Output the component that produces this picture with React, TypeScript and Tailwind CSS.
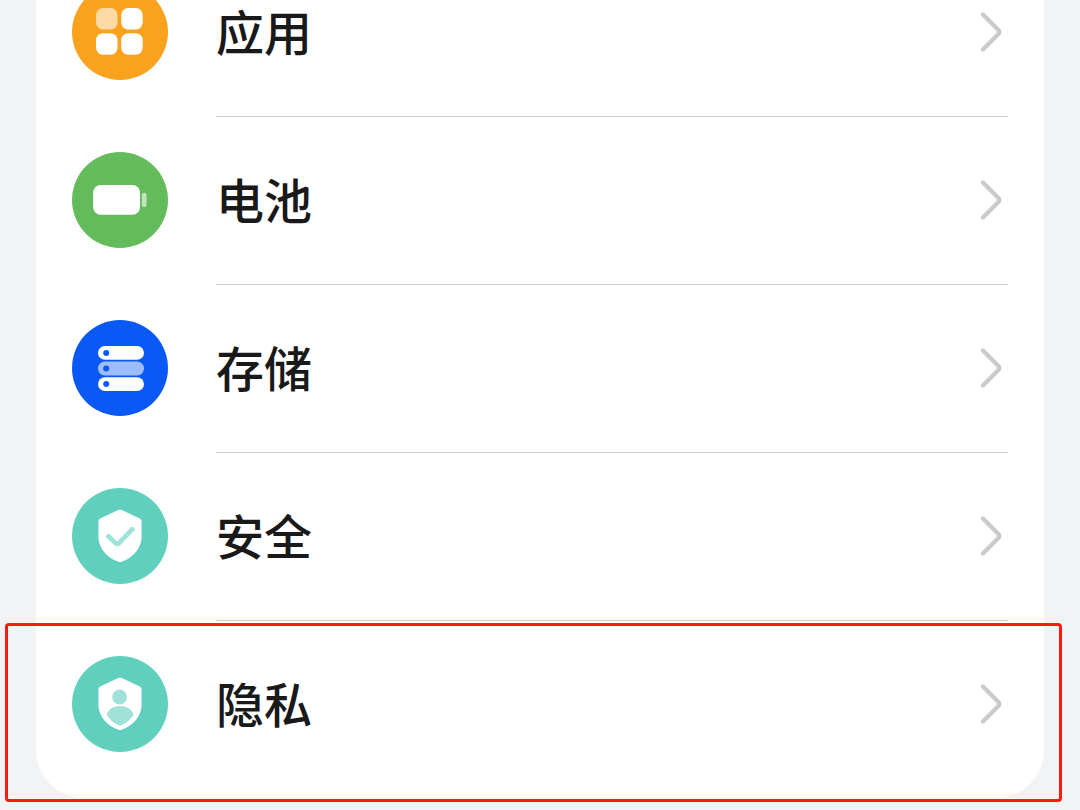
import type { ReactNode } from "react";

type Item = { id: string; label: string; color: string; icon: ReactNode; marked?: boolean };

const shield =
  "M45.8 22.2a4.5 4.5 0 0 1 4.4 0L67.8 30.4Q69.6 31.4 69.6 33.6V48C69.6 60 61.5 69.5 50.2 73.6Q48 74.6 45.8 73.6C34.5 69.5 26.4 60 26.4 48V33.6Q26.4 31.4 28.2 30.4Z";

const items: Item[] = [
  {
    id: "apps",
    label: "应用",
    color: "bg-[#faa21e]",
    icon: (
      <g fill="#fff">
        <rect x="24" y="24" width="21.5" height="21.5" rx="7" opacity="0.6" />
        <rect x="49.2" y="24" width="21.5" height="21.5" rx="7" />
        <rect x="24" y="49.2" width="21.5" height="21.5" rx="7" />
        <rect x="49.2" y="49.2" width="21.5" height="21.5" rx="7" />
      </g>
    ),
  },
  {
    id: "battery",
    label: "电池",
    color: "bg-[#64bb5c]",
    icon: (
      <g fill="#fff">
        <rect x="21.2" y="33" width="46.8" height="29.8" rx="7.5" />
        <rect x="69.8" y="40.8" width="4.8" height="14.2" rx="2.2" opacity="0.6" />
      </g>
    ),
  },
  {
    id: "storage",
    label: "存储",
    color: "bg-[#0a59f7]",
    icon: (
      <g>
        <rect x="26" y="26" width="46" height="13.8" rx="6.9" fill="#fff" />
        <rect x="26" y="41.6" width="46" height="13.8" rx="6.9" fill="#fff" opacity="0.6" />
        <rect x="26" y="57.2" width="46" height="13.8" rx="6.9" fill="#fff" />
        <g fill="#0a59f7">
          <circle cx="34.2" cy="32.9" r="3" />
          <circle cx="34.2" cy="48.5" r="3" />
          <circle cx="34.2" cy="64.1" r="3" />
        </g>
      </g>
    ),
  },
  {
    id: "security",
    label: "安全",
    color: "bg-[#61cfbe]",
    icon: (
      <g>
        <path d={shield} fill="#fff" />
        <path
          d="M36.4 48.2l6.900 6.700q1.900 1.900 3.900 0L60.400 41.200"
          fill="none"
          stroke="#a0e2d8"
          strokeWidth="4.8"
          strokeLinecap="round"
          strokeLinejoin="round"
        />
      </g>
    ),
  },
  {
    id: "privacy",
    label: "隐私",
    color: "bg-[#61cfbe]",
    marked: true,
    icon: (
      <g>
        <path d={shield} fill="#fff" />
        <g fill="#a0e2d8">
          <circle cx="47.6" cy="41" r="7.4" />
          <path d="M34.6 58.4C36.6 53 42 50 48 50s11.6 3 13.6 8.4C58.6 63.3 54.5 67 49.8 69.1Q48 69.9 46.2 69.1C41.5 67 37.6 63.3 34.6 58.4Z" />
        </g>
      </g>
    ),
  },
];

function Row({ item }: { item: Item }) {
  return (
    <li className="relative">
      <a href={`#${item.id}`} className="flex h-42 items-stretch gap-12 px-9">
        <span className="flex items-center">
          <span className={`size-24 shrink-0 rounded-full ${item.color}`}>
            <svg viewBox="0 0 96 96" className="size-24" aria-hidden="true">
              {item.icon}
            </svg>
          </span>
        </span>
        <span className="flex flex-1 items-center justify-between border-t border-[#cfcfcf] pr-1 pb-px">
          <span className="pb-1 text-5xl font-medium text-[#191919]">{item.label}</span>
          <svg viewBox="0 0 24 48" className="h-12 w-6" fill="none" aria-hidden="true">
            <path
              d="M3 6.5L18.6 22.2Q20.2 24 18.6 25.8L3 41.5"
              stroke="#cbcbcb"
              strokeWidth="4.4"
              strokeLinecap="round"
              strokeLinejoin="round"
            />
          </svg>
        </span>
      </a>
      {item.marked && (
        <span className="pointer-events-none absolute -right-[18px] -bottom-[14px] -left-[31px] top-[3px] rounded-[4px] border-3 border-[#ff1a10]" />
      )}
    </li>
  );
}

export default function App() {
  return (
    <main className="min-h-screen overflow-hidden bg-[#f1f3f5] px-9 pb-3 font-['Noto_Sans_CJK_SC',sans-serif]">
      <nav aria-label="设置" className="-mt-13 rounded-b-[48px] bg-white pb-[10px]">
        <ul>
          {items.map((item) => (
            <Row key={item.id} item={item} />
          ))}
        </ul>
      </nav>
    </main>
  );
}
